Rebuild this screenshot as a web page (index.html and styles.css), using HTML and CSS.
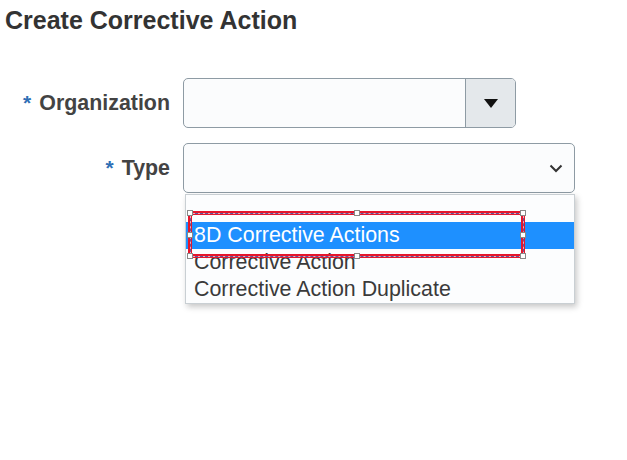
FILE: index.html
```html
<!DOCTYPE html>
<html>
<head>
<meta charset="utf-8">
<link rel="stylesheet" href="styles.css">
</head>
<body>
<div class="page">
  <h1 class="title">Create Corrective Action</h1>
  <div class="form">
    <label class="label"><span class="req">*</span>Organization</label>
    <div class="combo">
      <div class="combo-input"></div>
      <div class="combo-btn">
        <svg width="14" height="10" viewBox="0 0 14 10"><polygon points="0,0 14,0 7,9" fill="#111"/></svg>
      </div>
    </div>
    <label class="label"><span class="req">*</span>Type</label>
    <div class="select-wrap">
      <div class="select">
        <svg class="chev" width="14" height="9" viewBox="0 0 14 9"><polyline points="1.5,1.5 7,7 12.5,1.5" fill="none" stroke="#333" stroke-width="2"/></svg>
      </div>
      <div class="list">
        <div class="opt"></div>
        <div class="opt active">8D Corrective Actions</div>
        <div class="opt">Corrective Action</div>
        <div class="opt">Corrective Action Duplicate</div>
        <div class="marker">
          <span class="h h-tl"></span><span class="h h-tm"></span><span class="h h-tr"></span>
          <span class="h h-ml"></span><span class="h h-mr"></span>
          <span class="h h-bl"></span><span class="h h-bm"></span><span class="h h-br"></span>
        </div>
      </div>
    </div>
  </div>
</div>
</body>
</html>
```
FILE: styles.css
```css
* { box-sizing: border-box; }
html, body { margin: 0; padding: 0; background: #fff; }
body { font-family: "Liberation Sans", Arial, sans-serif; color: #333; }
.page { padding: 6px 0 0 5px; width: 627px; height: 460px; }
.title { margin: 0; font-size: 25px; line-height: 28px; font-weight: bold; color: #333; }
.form {
  display: grid;
  grid-template-columns: 165px auto;
  column-gap: 13px;
  row-gap: 15px;
  margin-top: 44px;
  align-items: center;
  justify-content: start;
}
.label {
  justify-self: end;
  font-size: 21.4px;
  font-weight: bold;
  color: #434343;
  white-space: nowrap;
  padding-top: 1px;
}
.req { color: #2f6fb5; margin-right: 8px; font-size: 21px; }
.combo {
  display: flex;
  width: 333px;
  height: 50px;
  border: 1px solid #8e9ba4;
  border-radius: 5px;
  background: #fbfcfd;
  overflow: hidden;
}
.combo-input { flex: 1; }
.combo-btn {
  width: 50px;
  border-left: 1px solid #8e9ba4;
  background: #e4e8eb;
  display: flex;
  align-items: center;
  justify-content: center;
  padding-top: 2px;
}
.select-wrap { position: relative; width: 392px; }
.select {
  height: 50px;
  border: 1px solid #8e9ba4;
  border-radius: 5px;
  background: #fbfcfd;
  display: flex;
  align-items: center;
  justify-content: flex-end;
  padding-right: 11px;
}
.list {
  position: absolute;
  top: 51px;
  left: 2px;
  width: 390px;
  background: #fcfdfe;
  border: 1px solid #c9cfd3;
  box-shadow: 2px 3px 6px rgba(0,0,0,0.22);
  padding-bottom: 0;
}
.opt {
  height: 27px;
  line-height: 27px;
  padding-left: 8px;
  font-size: 21.4px;
  color: #3a3a3a;
  white-space: nowrap;
}
.opt.active { background: #1e90ff; color: #fff; }
.marker {
  position: absolute;
  left: 2px;
  top: 16px;
  width: 337px;
  height: 47px;
  border: 4px solid #e5162c;
}
.marker::before {
  content: "";
  position: absolute;
  inset: -2.5px;
  border: 1px solid #f3a9b8;
}
.marker::after {
  content: "";
  position: absolute;
  inset: -2.5px;
  border: 1px dashed #5d5a9c;
}
.h {
  position: absolute;
  width: 6px;
  height: 6px;
  background: #fff;
  border: 1px solid #888;
  z-index: 1;
}
.h-tl { left: -5px; top: -5px; }
.h-tm { left: calc(50% - 3px); top: -5px; }
.h-tr { right: -5px; top: -5px; }
.h-ml { left: -5px; top: calc(50% - 3px); }
.h-mr { right: -5px; top: calc(50% - 3px); }
.h-bl { left: -5px; bottom: -5px; }
.h-bm { left: calc(50% - 3px); bottom: -5px; }
.h-br { right: -5px; bottom: -5px; }
```
